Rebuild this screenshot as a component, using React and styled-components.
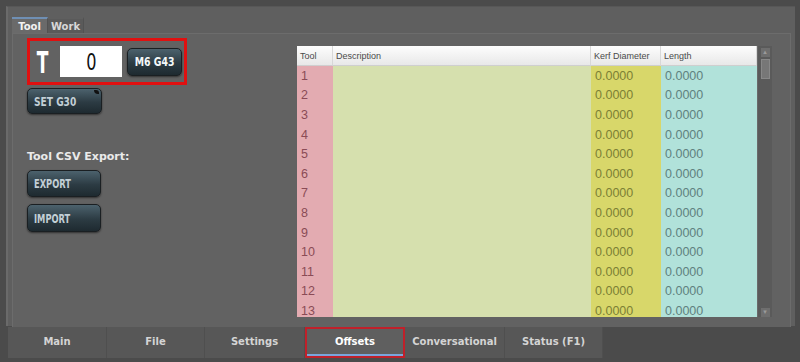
import React from 'react';
import styled, { createGlobalStyle } from 'styled-components';

const GlobalStyle = createGlobalStyle`
  html, body {
    margin: 0;
    padding: 0;
    background: #4b4b4b;
    font-family: "DejaVu Sans", "Liberation Sans", sans-serif;
  }
`;

const Page = styled.div`
  width: 800px;
  height: 362px;
  display: flex;
  flex-flow: column nowrap;
  background: #4b4b4b;
  overflow: hidden;
`;

const Frame = styled.div`
  margin: 6px 5px 0 6px;
  height: 320px;
  box-sizing: border-box;
  display: flex;
  flex-flow: column nowrap;
  background: #5f5f5f;
  border-left: 2px solid #6a6a6a;
  border-top: 1px solid #575757;
  padding: 10px 4px 0 4px;
`;

const TopTabs = styled.div`
  display: flex;
  flex-flow: row nowrap;
  height: 16px;
`;

const TopTab = styled.div`
  width: 36px;
  box-sizing: border-box;
  display: flex;
  align-items: center;
  justify-content: center;
  font-size: 10px;
  font-weight: bold;
  color: ${(p) => (p.$active ? '#f2f2f2' : '#d8d8d8')};
  background: ${(p) => (p.$active ? '#6a6a6a' : '#5a5a5a')};
  border-top: 2px solid ${(p) => (p.$active ? '#6f8fb4' : '#5f5f5f')};
  border-right: 1px solid #525252;
`;

const Pane = styled.div`
  flex: 1;
  display: flex;
  flex-flow: row nowrap;
  border: 1px solid #6c6c6c;
  border-bottom: none;
  background: #626262;
  padding: 12px 17px 7px 14px;
  margin-bottom: -1px;
`;

const LeftCol = styled.div`
  width: 270px;
  display: flex;
  flex-flow: column nowrap;
  align-items: flex-start;
`;

const ToolBox = styled.div`
  margin-top: -8px;
  width: 160px;
  height: 47px;
  box-sizing: border-box;
  border: 3px solid #e01010;
  display: flex;
  align-items: center;
  padding-left: 6px;
  gap: 5px;
`;

/* the UI font is a condensed face that isn't installed, so squeeze the glyphs */
const Squeeze = styled.span`
  display: inline-block;
  white-space: nowrap;
  transform: scaleX(${(p) => p.$sx || 0.72});
  transform-origin: ${(p) => (p.$left ? 'left center' : 'center')};
`;

const BigT = styled.span`
  width: 14px;
  display: flex;
  justify-content: center;
  font-size: 31px;
  font-weight: bold;
  color: #ffffff;
`;

const ToolInput = styled.div`
  width: 62px;
  height: 31px;
  margin-left: 5px;
  background: #ffffff;
  display: flex;
  align-items: center;
  justify-content: center;
  font-size: 23px;
  color: #111;
`;

const Button = styled.div`
  position: relative;
  width: ${(p) => p.$w || 74}px;
  height: ${(p) => p.$h || 26}px;
  box-sizing: border-box;
  display: flex;
  align-items: center;
  justify-content: ${(p) => (p.$center ? 'center' : 'flex-start')};
  padding-left: ${(p) => (p.$center ? 0 : 6)}px;
  border-radius: 5px;
  border: 1px solid #1a1f22;
  background: linear-gradient(#4c626d, #2c3b43 55%, #1e2a30);
  box-shadow: 0 1px 2px rgba(0, 0, 0, 0.5);
  color: ${(p) => (p.$bright ? '#f4f8fa' : '#c2cfd6')};
  font-size: ${(p) => p.$fs || 13}px;
  font-weight: bold;
  margin-top: ${(p) => p.$mt || 0}px;
`;

const Notch = styled.span`
  position: absolute;
  top: 1px;
  right: 2px;
  width: 5px;
  height: 4px;
  border-radius: 0 3px 0 4px;
  background: #111;
`;

const SectionLabel = styled.div`
  margin-top: 36px;
  font-size: 11px;
  font-weight: bold;
  color: #eaeaea;
`;

const TableWrap = styled.div`
  display: flex;
  flex-flow: row nowrap;
  height: 271px;
`;

const Table = styled.div`
  width: 460px;
  display: flex;
  flex-flow: column nowrap;
  overflow: hidden;
`;

const Grid = styled.div`
  display: grid;
  grid-template-columns: 36px 258px 70px 96px;
`;

const HeadCell = styled.div`
  height: 20px;
  box-sizing: border-box;
  display: flex;
  align-items: center;
  padding-left: 3px;
  font-family: "Liberation Sans", sans-serif;
  font-size: 9px;
  color: #4a4a4a;
  background: linear-gradient(#fdfdfd, #e8e8e8);
  border-right: 1px solid #d8d8d8;
  border-bottom: 1px solid #cfcfcf;
`;

const Cell = styled.div`
  height: 19.6px;
  display: flex;
  align-items: center;
  padding-left: 4px;
  font-family: "Liberation Sans", sans-serif;
  font-size: 12.5px;
  background: ${(p) => p.$bg};
  color: ${(p) => p.$fg};
`;

const Scroll = styled.div`
  width: 14px;
  display: flex;
  flex-flow: column nowrap;
  align-items: center;
  background: #5a5a5a;
  border-left: 1px solid #6a6a6a;
`;

const ScrollBtn = styled.div`
  width: 9px;
  height: 9px;
  margin-top: 2px;
  background: #6e6e6e;
  font-size: 7px;
  color: #9a9a9a;
  text-align: center;
  line-height: 9px;
`;

const ScrollThumb = styled.div`
  width: 9px;
  height: 20px;
  margin-top: 2px;
  background: #777;
  border: 1px solid #888;
  box-sizing: border-box;
`;

const Spacer = styled.div`
  flex: 1;
`;

const BottomBar = styled.div`
  display: flex;
  flex-flow: row nowrap;
  height: 31px;
  margin-left: 8px;
  margin-top: 1px;
`;

const BottomTab = styled.div`
  width: ${(p) => p.$w || 99}px;
  box-sizing: border-box;
  display: flex;
  align-items: center;
  justify-content: center;
  font-size: 10px;
  font-weight: bold;
  color: ${(p) => (p.$active ? '#ffffff' : '#d4d4d4')};
  background: ${(p) => (p.$active ? '#5f5f5f' : '#575757')};
  border-right: 1px solid #4f4f4f;
  border: ${(p) => (p.$active ? '2px solid #c0202a' : undefined)};
  box-shadow: ${(p) => (p.$active ? 'inset 0 -2px 0 #7aa6dc' : 'none')};
  padding-bottom: 3px;
`;

const rows = Array.from({ length: 13 }, (_, i) => i + 1);

const App = () => {
  return (
    <Page>
      <GlobalStyle />
      <Frame>
        <TopTabs>
          <TopTab $active>Tool</TopTab>
          <TopTab>Work</TopTab>
        </TopTabs>
        <Pane>
          <LeftCol>
            <ToolBox>
              <BigT>
                <Squeeze $sx={0.55}>T</Squeeze>
              </BigT>
              <ToolInput>
                <Squeeze $sx={0.7}>0</Squeeze>
              </ToolInput>
              <Button $w={55} $h={28} $center $bright $fs={13}>
                <Squeeze $sx={0.72}>M6 G43</Squeeze>
              </Button>
            </ToolBox>
            <Button $w={75} $mt={3}>
              <Squeeze $left $sx={0.7}>SET G30</Squeeze>
              <Notch />
            </Button>
            <SectionLabel>Tool CSV Export:</SectionLabel>
            <Button $mt={7} $h={27}>
              <Squeeze $left $sx={0.64}>EXPORT</Squeeze>
            </Button>
            <Button $mt={7} $h={28}>
              <Squeeze $left $sx={0.64}>IMPORT</Squeeze>
            </Button>
          </LeftCol>
          <TableWrap>
            <Table>
              <Grid>
                <HeadCell>Tool</HeadCell>
                <HeadCell>Description</HeadCell>
                <HeadCell>Kerf Diameter</HeadCell>
                <HeadCell>Length</HeadCell>
              </Grid>
              <Grid>
                {rows.map((n) => (
                  <React.Fragment key={n}>
                    <Cell $bg="#e3abb1" $fg="#8a4b56">{n}</Cell>
                    <Cell $bg="#d6e0ae" />
                    <Cell $bg="#d8d76a" $fg="#7c7f35">0.0000</Cell>
                    <Cell $bg="#b1e2da" $fg="#5f817e">0.0000</Cell>
                  </React.Fragment>
                ))}
              </Grid>
            </Table>
            <Scroll>
              <ScrollBtn>▴</ScrollBtn>
              <ScrollThumb />
              <Spacer />
              <ScrollBtn>▾</ScrollBtn>
            </Scroll>
          </TableWrap>
        </Pane>
      </Frame>
      <BottomBar>
        <BottomTab>Main</BottomTab>
        <BottomTab $w={98}>File</BottomTab>
        <BottomTab $w={100}>Settings</BottomTab>
        <BottomTab $active $w={100}>Offsets</BottomTab>
        <BottomTab $w={100}>Conversational</BottomTab>
        <BottomTab $w={98}>Status (F1)</BottomTab>
      </BottomBar>
    </Page>
  );
};

export default App;
